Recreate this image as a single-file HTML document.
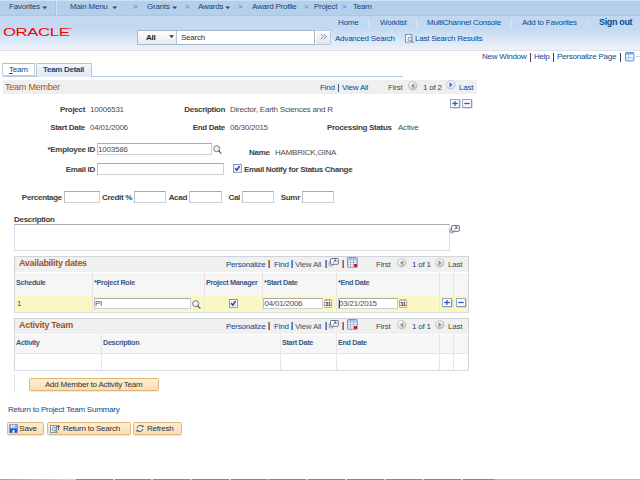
<!DOCTYPE html>
<html><head><meta charset="utf-8"><title>Team Detail</title>
<style>
html,body{margin:0;padding:0;}
body{width:640px;height:480px;overflow:hidden;background:#fff;position:relative;font-family:"Liberation Sans",sans-serif;font-size:8px;color:#222;letter-spacing:-0.22px;}
.a{position:absolute;white-space:nowrap;line-height:10px;}
.b{font-weight:bold;color:#404040;letter-spacing:-0.3px;}
.l{color:#0a4a90;}
.n{color:#27446e;}
.g{color:#5f7a9b;}
.d{color:#4a4a4a;}
.v{color:#4c4c4c;}
.d2{color:#44546c;}
.k{color:#333;}
.o{color:#a0551a;}
.h{color:#3b5680;}
.b.n{color:#27446e;}
.b.l{color:#0a4a90;}
.b.o{color:#a0551a;}
.b.h{color:#3b5680;}
.r{text-align:right;}
.in{position:absolute;background:#fff;border:1px solid #cbd0d8;border-top-color:#a6abb3;border-left-color:#bcc1c9;box-sizing:border-box;}
.box{position:absolute;box-sizing:border-box;}
.btn{position:absolute;box-sizing:border-box;border:1px solid #e0b676;border-radius:1.5px;background:linear-gradient(#fdedd3,#f9deb8);box-shadow:0 0.5px 0 #ecd4ae;}
</style></head><body>
<svg width="0" height="0" style="position:absolute"><defs><radialGradient id="gD" cx="0.4" cy="0.3" r="0.75"><stop offset="0" stop-color="#ffffff"/><stop offset="0.5" stop-color="#e9e9e9"/><stop offset="1" stop-color="#b4b4b4"/></radialGradient><radialGradient id="gE" cx="0.4" cy="0.3" r="0.75"><stop offset="0" stop-color="#ffffff"/><stop offset="0.55" stop-color="#eef3fa"/><stop offset="1" stop-color="#c4d2e6"/></radialGradient><radialGradient id="gL" cx="0.45" cy="0.4" r="0.7"><stop offset="0" stop-color="#ffffff"/><stop offset="1" stop-color="#c4dffa"/></radialGradient></defs></svg>
<div class="box" style="left:0px;top:0px;width:640px;height:16px;background:#b2cfeb;border-top:1px solid #cfe0f2;border-bottom:1px solid #a9c8e9;"></div>
<div class="box" style="left:0px;top:16px;width:640px;height:34px;background:linear-gradient(#c2d8f1 0%,#c4daf1 38%,#dbe7f6 72%,#eef2fa 100%);"></div>
<div class="box" style="left:0px;top:50px;width:640px;height:1px;background:#dde2e8;"></div>
<div class="box" style="left:55px;top:1px;width:1px;height:14px;background:#a3c0e1;"></div>
<div class="box" style="left:56px;top:1px;width:1px;height:14px;background:#d5e4f5;"></div>
<span class="a n" style="left:9px;top:2px;">Favorites<svg width="6" height="4" style="margin-left:2px;vertical-align:-1px"><polygon points="0.3,0.4 5.1,0.4 2.7,3.2" fill="#364662"/></svg></span>
<span class="a n" style="left:70px;top:2px;">Main Menu <svg width="6" height="4" style="margin-left:2px;vertical-align:-1px"><polygon points="0.3,0.4 5.1,0.4 2.7,3.2" fill="#364662"/></svg></span>
<span class="a g" style="left:133px;top:2px;">&gt;</span>
<span class="a n" style="left:147px;top:2px;">Grants<svg width="6" height="4" style="margin-left:2px;vertical-align:-1px"><polygon points="0.3,0.4 5.1,0.4 2.7,3.2" fill="#364662"/></svg></span>
<span class="a g" style="left:185px;top:2px;">&gt;</span>
<span class="a n" style="left:198px;top:2px;">Awards<svg width="6" height="4" style="margin-left:2px;vertical-align:-1px"><polygon points="0.3,0.4 5.1,0.4 2.7,3.2" fill="#364662"/></svg></span>
<span class="a g" style="left:238px;top:2px;">&gt;</span>
<span class="a n" style="left:252px;top:2px;">Award Profile</span>
<span class="a g" style="left:304px;top:2px;">&gt;</span>
<span class="a n" style="left:314px;top:2px;">Project</span>
<span class="a g" style="left:342px;top:2px;">&gt;</span>
<span class="a n" style="left:353px;top:2px;">Team</span>
<span class="a l" style="left:338px;top:18px;">Home</span>
<span class="a l" style="left:380px;top:18px;">Worklist</span>
<span class="a l" style="left:427px;top:18px;">MultiChannel Console</span>
<span class="a l" style="left:522px;top:18px;">Add to Favorites</span>
<span class="a l b" style="left:599px;top:17px;font-size:9px;letter-spacing:-0.35px;">Sign out</span>
<div class="box" style="left:368px;top:19px;width:1px;height:8px;background:#d6e4f4;"></div>
<div class="box" style="left:416px;top:19px;width:1px;height:8px;background:#d6e4f4;"></div>
<div class="box" style="left:511px;top:19px;width:1px;height:8px;background:#d6e4f4;"></div>
<div class="box" style="left:587px;top:19px;width:1px;height:8px;background:#d6e4f4;"></div>
<svg class="a" style="left:0;top:24px;" width="80" height="16"><text x="3" y="11.6" font-family="Liberation Sans, sans-serif" font-size="10.4" fill="#f80000" textLength="66.5" lengthAdjust="spacingAndGlyphs">ORACLE</text><circle cx="70.6" cy="4.6" r="0.6" fill="#f80000"/></svg>
<div class="box" style="left:136.5px;top:30px;width:178.5px;height:15px;border:1px solid #a9b7c9;background:#fff;"></div>
<div class="box" style="left:137.5px;top:31px;width:39.5px;height:13px;background:linear-gradient(#fdfdfd,#e6eaec);border-right:1px solid #b7c1cf;"></div>
<span class="a b" style="left:146px;top:33px;font-size:8px;color:#222;">All</span>
<svg class="a" style="left:168.5px;top:35.3px;" width="6" height="4"><polygon points="0.2,0.3 4.8,0.3 2.5,3.1" fill="#2a2a2a"/></svg>
<span class="a " style="left:181px;top:33px;color:#333;">Search</span>
<div class="box" style="left:315px;top:30px;width:16px;height:15px;background:linear-gradient(#fbfcfd,#e2e6ec);border:1px solid #c0c9d6;border-left-color:#fff;"></div>
<svg class="a" style="left:320px;top:33px;" width="8" height="8"><path d="M0.8 1 L3.4 3.6 L0.8 6.2 M3.8 1 L6.4 3.6 L3.8 6.2" fill="none" stroke="#6582aa" stroke-width="0.9"/></svg>
<span class="a l" style="left:335px;top:34px;">Advanced Search</span>
<svg class="a" style="left:404.5px;top:34px;" width="10" height="10"><rect x="0.5" y="0.5" width="6.4" height="7.6" fill="#f6f9fd" stroke="#6a8fc4" stroke-width="0.9"/><circle cx="5" cy="5" r="2" fill="#e4edf8" stroke="#77808c" stroke-width="0.8"/><line x1="6.5" y1="6.5" x2="8.6" y2="8.6" stroke="#c89018" stroke-width="1.3"/></svg>
<span class="a l" style="left:415px;top:34px;">Last Search Results</span>
<span class="a l" style="left:482px;top:52px;">New Window</span>
<div class="box" style="left:530px;top:53px;width:1px;height:9px;background:#4a3560;"></div>
<span class="a l" style="left:534px;top:52px;">Help</span>
<div class="box" style="left:553px;top:53px;width:1px;height:9px;background:#4a3560;"></div>
<span class="a l" style="left:557px;top:52px;">Personalize Page</span>
<div class="box" style="left:620px;top:53px;width:1px;height:9px;background:#4a3560;"></div>
<svg class="a" style="left:625px;top:52px;" width="15" height="10"><rect x="0.5" y="0.5" width="8.4" height="8.4" rx="0.6" fill="#f4f8fe" stroke="#5a8ae0"/><rect x="1" y="1" width="7.4" height="1.8" fill="#8fb4f0"/><rect x="10.4" y="4" width="4.6" height="0.8" fill="#c4c8cc"/><path d="M3.6 2.8 V8.9 M0.5 5.8 H8.9" stroke="#8fb0dc" stroke-width="0.7"/></svg>
<div class="box" style="left:3px;top:76px;width:400px;height:1px;background:#b9c9ec;"></div>
<div class="box" style="left:2px;top:63px;width:33px;height:13px;border:1px solid #c6ccd8;border-top-color:#b4bccb;background:#fff;"></div>
<span class="a l" style="left:9px;top:65px;"><u>T</u>eam</span>
<div class="box" style="left:36px;top:63px;width:56px;height:14px;border:1px solid #b9c4d6;border-bottom:none;background:linear-gradient(#f3f7fd,#e0e9f7);"></div>
<span class="a b n" style="left:43px;top:65px;">Team Detail</span>
<div class="box" style="left:3px;top:80px;width:474px;height:14px;background:#efefef;"></div>
<span class="a o" style="left:5px;top:82px;font-size:9px;">Team Member</span>
<span class="a l" style="left:320px;top:83px;">Find</span>
<div class="box" style="left:338px;top:84px;width:1px;height:8px;background:#3c5c8c;"></div>
<span class="a l" style="left:342px;top:83px;">View All</span>
<span class="a d" style="left:388px;top:83px;">First</span>
<svg class="a" style="left:408px;top:81px;" width="10" height="10"><circle cx="4.7" cy="4.7" r="4.2" fill="url(#gD)" stroke="#bcbcbc" stroke-width="0.8"/><polygon points="6.2,2 2.9,4.7 6.2,7.4" fill="#969696"/></svg>
<span class="a n" style="left:423px;top:83px;">1 of 2</span>
<svg class="a" style="left:446px;top:80px;" width="10" height="10"><circle cx="4.7" cy="4.7" r="4.2" fill="url(#gE)" stroke="#aebfd8" stroke-width="0.8"/><polygon points="3.4,2 6.7,4.7 3.4,7.4" fill="#3f74cc"/></svg>
<span class="a l" style="left:459px;top:83px;">Last</span>
<svg class="a" style="left:450px;top:99px;" width="11" height="10"><rect x="0.5" y="0.5" width="9" height="8" fill="#f6f8fc" stroke="#8ca2c2" stroke-width="0.9"/><path d="M1.2 8.9 H9.9 V1.2" fill="none" stroke="#6a7e9e" stroke-width="0.6"/><rect x="2.3" y="3.85" width="5.4" height="1.3" fill="#2d5cb0"/><rect x="4.35" y="2.1" width="1.3" height="4.8" fill="#2d5cb0"/></svg>
<svg class="a" style="left:462px;top:99px;" width="11" height="10"><rect x="0.5" y="0.5" width="9" height="8" fill="#f6f8fc" stroke="#8ca2c2" stroke-width="0.9"/><path d="M1.2 8.9 H9.9 V1.2" fill="none" stroke="#6a7e9e" stroke-width="0.6"/><rect x="2.3" y="3.85" width="5.4" height="1.3" fill="#2d5cb0"/></svg>
<span class="a r b" style="left:-55px;width:140px;top:105px;">Project</span>
<span class="a v" style="left:90px;top:105px;">10006531</span>
<span class="a r b" style="left:85px;width:140px;top:105px;">Description</span>
<span class="a v" style="left:230px;top:105px;">Director, Earth Sciences and R</span>
<span class="a r b" style="left:-55px;width:140px;top:123px;">Start Date</span>
<span class="a v" style="left:90px;top:123px;">04/01/2006</span>
<span class="a r b" style="left:85px;width:140px;top:123px;">End Date</span>
<span class="a v" style="left:230px;top:123px;">06/30/2015</span>
<span class="a b" style="left:327px;top:123px;">Processing Status</span>
<span class="a v" style="left:398px;top:123px;">Active</span>
<span class="a r b" style="left:-45px;width:140px;top:145px;">*Employee ID</span>
<div class="in" style="left:97px;top:143px;width:115px;height:12px;"></div>
<span class="a v" style="left:98px;top:145px;">1003586</span>
<svg class="a" style="left:213px;top:144.6px;" width="10" height="10"><circle cx="3.7" cy="3.7" r="3.05" fill="url(#gL)" stroke="#6c7480" stroke-width="0.9"/><line x1="6" y1="6" x2="8.1" y2="8.3" stroke="#7a5a22" stroke-width="1.15" stroke-linecap="round"/></svg>
<span class="a b" style="left:249px;top:148px;">Name</span>
<span class="a v" style="left:275px;top:148px;">HAMBRICK,GINA</span>
<span class="a r b" style="left:-45px;width:140px;top:165px;">Email ID</span>
<div class="in" style="left:97px;top:163px;width:127px;height:12px;"></div>
<svg class="a" style="left:233px;top:164px;" width="10" height="10"><rect x="0.5" y="0.5" width="7.8" height="7.8" fill="#e2ebf7" stroke="#7a8ca8" stroke-width="0.9"/><rect x="1.3" y="1.3" width="6.2" height="6.2" fill="none" stroke="#fff" stroke-width="0.6"/><polyline points="2.2,4.2 3.8,6.2 6.6,2.2" fill="none" stroke="#1f3d96" stroke-width="1.4"/></svg>
<span class="a b" style="left:244px;top:165px;">Email Notify for Status Change</span>
<span class="a r b" style="left:-78px;width:140px;top:193px;">Percentage</span>
<div class="in" style="left:64px;top:191px;width:36px;height:12px;"></div>
<span class="a r b" style="left:-8px;width:140px;top:193px;">Credit %</span>
<div class="in" style="left:134px;top:191px;width:31.5px;height:12px;"></div>
<span class="a r b" style="left:47px;width:140px;top:193px;">Acad</span>
<div class="in" style="left:189px;top:191px;width:32.5px;height:12px;"></div>
<span class="a r b" style="left:100px;width:140px;top:193px;">Cal</span>
<div class="in" style="left:242px;top:191px;width:32px;height:12px;"></div>
<span class="a r b" style="left:160px;width:140px;top:193px;">Sumr</span>
<div class="in" style="left:302px;top:191px;width:32px;height:12px;"></div>
<span class="a b" style="left:14px;top:215px;">Description</span>
<div class="in" style="left:14px;top:224px;width:436px;height:27px;border-color:#d5dcea;border-top-color:#a6abb3;"></div>
<svg class="a" style="left:449px;top:225px;" width="12" height="10"><rect x="1.2" y="3.6" width="3.4" height="4.2" rx="0.5" fill="#eef2f8" stroke="#7a8aa2" stroke-width="0.8"/><rect x="2.6" y="0.5" width="7.7" height="5.8" rx="0.6" fill="#fbfcfe" stroke="#4f6482" stroke-width="0.9"/><path d="M5.2 4.6 L8 2 M6 2 H8 V4" fill="none" stroke="#3a4a64" stroke-width="0.8"/></svg>
<div class="box" style="left:14px;top:256px;width:455px;height:16px;background:#f0f0f0;border:1px solid #cfd3da;border-bottom:none;"></div>
<span class="a b o" style="left:19px;top:258px;font-size:9px;letter-spacing:-0.3px;">Availability dates</span>
<span class="a l" style="left:226px;top:260px;">Personalize</span>
<div class="box" style="left:267.5px;top:260px;width:1px;height:8px;background:#c48c6c;"></div>
<div class="box" style="left:268.5px;top:260px;width:1px;height:8px;background:#5876ac;"></div>
<span class="a l" style="left:274px;top:260px;">Find</span>
<div class="box" style="left:290.5px;top:260px;width:1px;height:8px;background:#c48c6c;"></div>
<div class="box" style="left:291.5px;top:260px;width:1px;height:8px;background:#5876ac;"></div>
<span class="a d2" style="left:295px;top:260px;">View All</span>
<div class="box" style="left:324.5px;top:260px;width:1px;height:8px;background:#c48c6c;"></div>
<div class="box" style="left:325.5px;top:260px;width:1px;height:8px;background:#5876ac;"></div>
<svg class="a" style="left:328px;top:258px;" width="12" height="10"><rect x="1.2" y="3.6" width="3.4" height="4.2" rx="0.5" fill="#eef2f8" stroke="#7a8aa2" stroke-width="0.8"/><rect x="2.6" y="0.5" width="7.7" height="5.8" rx="0.6" fill="#fbfcfe" stroke="#4f6482" stroke-width="0.9"/><path d="M5.2 4.6 L8 2 M6 2 H8 V4" fill="none" stroke="#3a4a64" stroke-width="0.8"/></svg>
<div class="box" style="left:341.5px;top:260px;width:1px;height:8px;background:#c48c6c;"></div>
<div class="box" style="left:342.5px;top:260px;width:1px;height:8px;background:#5876ac;"></div>
<svg class="a" style="left:347px;top:257px;" width="12" height="12"><rect x="0.6" y="0.6" width="9.6" height="9.6" rx="1" fill="#fbfcfe" stroke="#6a98e4" stroke-width="1.1"/><rect x="1" y="1" width="8.8" height="1.6" fill="#a9c6f4"/><path d="M1 3.2 H9.8 M1 5.5 H9.8 M1 7.8 H9.8 M3.6 1 V10 M6.6 1 V10" stroke="#9aa6bc" stroke-width="0.7"/><rect x="7" y="7.2" width="3" height="2.6" fill="#b81020"/></svg>
<span class="a d" style="left:376px;top:260px;">First</span>
<svg class="a" style="left:397px;top:257.5px;" width="10" height="10"><circle cx="4.7" cy="4.7" r="4.2" fill="url(#gD)" stroke="#bcbcbc" stroke-width="0.8"/><polygon points="6.2,2 2.9,4.7 6.2,7.4" fill="#969696"/></svg>
<span class="a n" style="left:412px;top:260px;">1 of 1</span>
<svg class="a" style="left:435px;top:257.5px;" width="10" height="10"><circle cx="4.7" cy="4.7" r="4.2" fill="url(#gD)" stroke="#bcbcbc" stroke-width="0.8"/><polygon points="3.4,2 6.7,4.7 3.4,7.4" fill="#969696"/></svg>
<span class="a d" style="left:448px;top:260px;">Last</span>
<div class="box" style="left:14px;top:272px;width:455px;height:23px;background:#f6f6f6;border-left:1px solid #cfd3da;border-right:1px solid #cfd3da;border-top:1px solid #fff;"></div>
<span class="a b h" style="left:16px;top:278px;font-size:7.2px;letter-spacing:-0.3px;">Schedule</span>
<div class="box" style="left:92px;top:272px;width:1px;height:23px;background:#e6e6e6;"></div>
<span class="a b h" style="left:94px;top:278px;font-size:7.2px;letter-spacing:-0.3px;">*Project Role</span>
<div class="box" style="left:204px;top:272px;width:1px;height:23px;background:#e6e6e6;"></div>
<span class="a b h" style="left:206px;top:278px;font-size:7.2px;letter-spacing:-0.3px;">Project Manager</span>
<div class="box" style="left:262px;top:272px;width:1px;height:23px;background:#e6e6e6;"></div>
<span class="a b h" style="left:264px;top:278px;font-size:7.2px;letter-spacing:-0.3px;">*Start Date</span>
<div class="box" style="left:336px;top:272px;width:1px;height:23px;background:#e6e6e6;"></div>
<span class="a b h" style="left:338px;top:278px;font-size:7.2px;letter-spacing:-0.3px;">*End Date</span>
<div class="box" style="left:439px;top:272px;width:1px;height:23px;background:#e6e6e6;"></div>
<div class="box" style="left:453px;top:272px;width:1px;height:23px;background:#e6e6e6;"></div>
<div class="box" style="left:14px;top:295px;width:455px;height:18px;background:#f9f7c6;border:1px solid #cfd3da;border-top:none;border-bottom-color:#d9dce2;"></div>
<div class="box" style="left:92px;top:295px;width:1px;height:17px;background:#eeecd0;"></div>
<div class="box" style="left:204px;top:295px;width:1px;height:17px;background:#eeecd0;"></div>
<div class="box" style="left:262px;top:295px;width:1px;height:17px;background:#eeecd0;"></div>
<div class="box" style="left:336px;top:295px;width:1px;height:17px;background:#eeecd0;"></div>
<div class="box" style="left:439px;top:295px;width:1px;height:17px;background:#eeecd0;"></div>
<div class="box" style="left:453px;top:295px;width:1px;height:17px;background:#eeecd0;"></div>
<span class="a v" style="left:17px;top:299px;">1</span>
<div class="in" style="left:94px;top:298px;width:96.5px;height:11px;"></div>
<span class="a v" style="left:95px;top:299px;">PI</span>
<svg class="a" style="left:192px;top:300px;" width="10" height="10"><circle cx="3.7" cy="3.7" r="3.05" fill="url(#gL)" stroke="#6c7480" stroke-width="0.9"/><line x1="6" y1="6" x2="8.1" y2="8.3" stroke="#7a5a22" stroke-width="1.15" stroke-linecap="round"/></svg>
<svg class="a" style="left:229px;top:299px;" width="10" height="10"><rect x="0.5" y="0.5" width="7.8" height="7.8" fill="#e2ebf7" stroke="#7a8ca8" stroke-width="0.9"/><rect x="1.3" y="1.3" width="6.2" height="6.2" fill="none" stroke="#fff" stroke-width="0.6"/><polyline points="2.2,4.2 3.8,6.2 6.6,2.2" fill="none" stroke="#1f3d96" stroke-width="1.4"/></svg>
<div class="in" style="left:263px;top:298px;width:59.5px;height:11px;"></div>
<span class="a v" style="left:264.5px;top:299px;">04/01/2006</span>
<svg class="a" style="left:324px;top:299px;" width="9" height="10"><rect x="0.5" y="1" width="7.2" height="7.4" rx="0.6" fill="#ffffff" stroke="#c49458" stroke-width="0.9"/><rect x="1.9" y="0.2" width="1" height="1.6" fill="#5a7ab0"/><rect x="5.2" y="0.2" width="1" height="1.6" fill="#5a7ab0"/><text x="1.3" y="7.3" font-size="5.4" font-weight="bold" font-family="Liberation Sans, sans-serif" fill="#222" letter-spacing="-0.3">31</text></svg>
<div class="in" style="left:338px;top:298px;width:59.5px;height:11px;"></div>
<span class="a v" style="left:339px;top:299px;">03/21/2015</span>
<div class="box" style="left:339px;top:300px;width:1px;height:8px;background:#2a48a0;"></div>
<svg class="a" style="left:399px;top:299px;" width="9" height="10"><rect x="0.5" y="1" width="7.2" height="7.4" rx="0.6" fill="#ffffff" stroke="#c49458" stroke-width="0.9"/><rect x="1.9" y="0.2" width="1" height="1.6" fill="#5a7ab0"/><rect x="5.2" y="0.2" width="1" height="1.6" fill="#5a7ab0"/><text x="1.3" y="7.3" font-size="5.4" font-weight="bold" font-family="Liberation Sans, sans-serif" fill="#222" letter-spacing="-0.3">31</text></svg>
<svg class="a" style="left:442px;top:298px;" width="11" height="10"><rect x="0.5" y="0.5" width="9" height="8" fill="#f6f8fc" stroke="#8ca2c2" stroke-width="0.9"/><path d="M1.2 8.9 H9.9 V1.2" fill="none" stroke="#6a7e9e" stroke-width="0.6"/><rect x="2.3" y="3.85" width="5.4" height="1.3" fill="#2d5cb0"/><rect x="4.35" y="2.1" width="1.3" height="4.8" fill="#2d5cb0"/></svg>
<svg class="a" style="left:456px;top:298px;" width="11" height="10"><rect x="0.5" y="0.5" width="9" height="8" fill="#f6f8fc" stroke="#8ca2c2" stroke-width="0.9"/><path d="M1.2 8.9 H9.9 V1.2" fill="none" stroke="#6a7e9e" stroke-width="0.6"/><rect x="2.3" y="3.85" width="5.4" height="1.3" fill="#2d5cb0"/></svg>
<div class="box" style="left:14px;top:318px;width:455px;height:16px;background:#f0f0f0;border:1px solid #cfd3da;border-bottom:none;"></div>
<span class="a b o" style="left:19px;top:320px;font-size:9px;letter-spacing:-0.3px;">Activity Team</span>
<span class="a l" style="left:226px;top:322px;">Personalize</span>
<div class="box" style="left:267.5px;top:322px;width:1px;height:8px;background:#c48c6c;"></div>
<div class="box" style="left:268.5px;top:322px;width:1px;height:8px;background:#5876ac;"></div>
<span class="a l" style="left:274px;top:322px;">Find</span>
<div class="box" style="left:290.5px;top:322px;width:1px;height:8px;background:#c48c6c;"></div>
<div class="box" style="left:291.5px;top:322px;width:1px;height:8px;background:#5876ac;"></div>
<span class="a d2" style="left:295px;top:322px;">View All</span>
<div class="box" style="left:324.5px;top:322px;width:1px;height:8px;background:#c48c6c;"></div>
<div class="box" style="left:325.5px;top:322px;width:1px;height:8px;background:#5876ac;"></div>
<svg class="a" style="left:328px;top:320px;" width="12" height="10"><rect x="1.2" y="3.6" width="3.4" height="4.2" rx="0.5" fill="#eef2f8" stroke="#7a8aa2" stroke-width="0.8"/><rect x="2.6" y="0.5" width="7.7" height="5.8" rx="0.6" fill="#fbfcfe" stroke="#4f6482" stroke-width="0.9"/><path d="M5.2 4.6 L8 2 M6 2 H8 V4" fill="none" stroke="#3a4a64" stroke-width="0.8"/></svg>
<div class="box" style="left:341.5px;top:322px;width:1px;height:8px;background:#c48c6c;"></div>
<div class="box" style="left:342.5px;top:322px;width:1px;height:8px;background:#5876ac;"></div>
<svg class="a" style="left:347px;top:319px;" width="12" height="12"><rect x="0.6" y="0.6" width="9.6" height="9.6" rx="1" fill="#fbfcfe" stroke="#6a98e4" stroke-width="1.1"/><rect x="1" y="1" width="8.8" height="1.6" fill="#a9c6f4"/><path d="M1 3.2 H9.8 M1 5.5 H9.8 M1 7.8 H9.8 M3.6 1 V10 M6.6 1 V10" stroke="#9aa6bc" stroke-width="0.7"/><rect x="7" y="7.2" width="3" height="2.6" fill="#b81020"/></svg>
<span class="a d" style="left:376px;top:322px;">First</span>
<svg class="a" style="left:397px;top:319.5px;" width="10" height="10"><circle cx="4.7" cy="4.7" r="4.2" fill="url(#gD)" stroke="#bcbcbc" stroke-width="0.8"/><polygon points="6.2,2 2.9,4.7 6.2,7.4" fill="#969696"/></svg>
<span class="a n" style="left:412px;top:322px;">1 of 1</span>
<svg class="a" style="left:435px;top:319.5px;" width="10" height="10"><circle cx="4.7" cy="4.7" r="4.2" fill="url(#gD)" stroke="#bcbcbc" stroke-width="0.8"/><polygon points="3.4,2 6.7,4.7 3.4,7.4" fill="#969696"/></svg>
<span class="a d" style="left:448px;top:322px;">Last</span>
<div class="box" style="left:14px;top:334px;width:455px;height:19px;background:#f6f6f6;border-left:1px solid #cfd3da;border-right:1px solid #cfd3da;border-top:1px solid #fff;"></div>
<span class="a b h" style="left:16px;top:338px;font-size:7.2px;letter-spacing:-0.3px;">Activity</span>
<div class="box" style="left:101px;top:334px;width:1px;height:19px;background:#e6e6e6;"></div>
<span class="a b h" style="left:103px;top:338px;font-size:7.2px;letter-spacing:-0.3px;">Description</span>
<div class="box" style="left:280px;top:334px;width:1px;height:19px;background:#e6e6e6;"></div>
<span class="a b h" style="left:282px;top:338px;font-size:7.2px;letter-spacing:-0.3px;">Start Date</span>
<div class="box" style="left:336px;top:334px;width:1px;height:19px;background:#e6e6e6;"></div>
<span class="a b h" style="left:338px;top:338px;font-size:7.2px;letter-spacing:-0.3px;">End Date</span>
<div class="box" style="left:439px;top:334px;width:1px;height:19px;background:#e6e6e6;"></div>
<div class="box" style="left:453px;top:334px;width:1px;height:19px;background:#e6e6e6;"></div>
<div class="box" style="left:14px;top:353px;width:455px;height:18px;background:#fff;border:1px solid #cfd3da;border-top:1px solid #e4e4e4;border-bottom-color:#d9dce2;"></div>
<div class="box" style="left:101px;top:354px;width:1px;height:16px;background:#e6e6e6;"></div>
<div class="box" style="left:280px;top:354px;width:1px;height:16px;background:#e6e6e6;"></div>
<div class="box" style="left:336px;top:354px;width:1px;height:16px;background:#e6e6e6;"></div>
<div class="box" style="left:439px;top:354px;width:1px;height:16px;background:#e6e6e6;"></div>
<div class="box" style="left:453px;top:354px;width:1px;height:16px;background:#e6e6e6;"></div>
<div class="box" style="left:14px;top:375px;width:1px;height:18px;background:#e2e2e2;"></div>
<div class="btn" style="left:29px;top:378px;width:130px;height:13px;"></div>
<span class="a k" style="left:45px;top:380px;">Add Member to Activity Team</span>
<span class="a l" style="left:8px;top:405px;">Return to Project Team Summary</span>
<div class="btn" style="left:7px;top:422px;width:37px;height:13px;"></div>
<svg class="a" style="left:9px;top:424px;" width="10" height="10"><rect x="0.4" y="0.4" width="8.2" height="8.2" rx="0.7" fill="#7fb0f2" stroke="#5a92e4" stroke-width="0.8"/><rect x="2" y="0.8" width="1.3" height="3" fill="#eef5ff"/><rect x="4.4" y="0.8" width="1.3" height="3" fill="#eef5ff"/><rect x="1" y="4.6" width="7" height="4" fill="#2456c8"/><rect x="3.6" y="6" width="1.8" height="2.8" fill="#f4f8ff"/></svg>
<span class="a k" style="left:19.3px;top:424px;">Save</span>
<div class="btn" style="left:47px;top:422px;width:84px;height:13px;"></div>
<svg class="a" style="left:50px;top:424px;" width="12" height="10"><rect x="0.5" y="1.5" width="6" height="7" fill="#f2f6fc" stroke="#6b8fc8" stroke-width="0.9"/><circle cx="4.2" cy="5" r="2" fill="#dfeaf8" stroke="#6a7a90" stroke-width="0.8"/><line x1="5.6" y1="6.6" x2="7.6" y2="8.6" stroke="#b8861c" stroke-width="1.3"/><path d="M8.4 6 V1.6 M6.8 3.2 L8.4 1.4 L10 3.2" fill="none" stroke="#3b3b3b" stroke-width="0.9"/></svg>
<span class="a k" style="left:63px;top:424px;">Return to Search</span>
<div class="btn" style="left:133px;top:422px;width:49px;height:13px;"></div>
<svg class="a" style="left:136px;top:424px;" width="9" height="10"><path d="M1.2 4 A3 3 0 0 1 6.4 2.4" fill="none" stroke="#2d56a8" stroke-width="1"/><path d="M6.8 5 A3 3 0 0 1 1.6 6.6" fill="none" stroke="#2d56a8" stroke-width="1"/><polygon points="5.2,2.8 7.6,0.8 7.4,3.6" fill="#2d56a8"/><polygon points="2.8,6.2 0.4,8.2 0.6,5.4" fill="#2d56a8"/></svg>
<span class="a k" style="left:147px;top:424px;">Refresh</span>
<div class="box" style="left:0px;top:479px;width:76px;height:1px;background:linear-gradient(90deg,#8da2ba,#c9d6e6);"></div>
<div class="box" style="left:76px;top:479px;width:419px;height:1px;background:repeating-linear-gradient(90deg,#80878f 0,#80878f 36.7px,#d0d4d8 36.7px,#d0d4d8 38.7px);"></div>
<div class="box" style="left:495px;top:479px;width:145px;height:1px;background:#b4bcc8;"></div>
</body></html>
